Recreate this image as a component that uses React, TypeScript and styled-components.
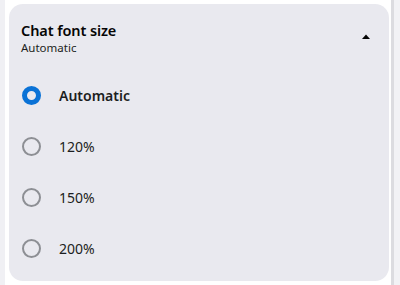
import React, { useState } from 'react';
import styled, { createGlobalStyle } from 'styled-components';

const GlobalStyle = createGlobalStyle`
	html, body {
		margin: 0;
		padding: 0;
		background: #ffffff;
	}
	body {
		font-family: 'Noto Sans', 'Open Sans', sans-serif;
		color: #050505;
	}
`;

const StyledPage = styled.div`
	display: flex;
	width: 400px;
	height: 285px;
	overflow: hidden;
	background: #ffffff;
`;

const StyledLeftEdge = styled.div`
	width: 5px;
	background: #f0f0f4;
	margin-right: 4px;
`;

const StyledCard = styled.section`
	width: 380px;
	margin-top: 4px;
	height: 277px;
	background: #e9e9ef;
	border-radius: 14px;
	box-sizing: border-box;
`;

const StyledScrollbar = styled.div`
	display: flex;
	margin-left: 2px;

	&::before {
		content: '';
		width: 3px;
		background: #dcdce0;
	}

	&::after {
		content: '';
		width: 6px;
		background: #f2f2f5;
	}
`;

const StyledHeader = styled.button`
	display: flex;
	align-items: flex-start;
	justify-content: space-between;
	width: 100%;
	padding: 16px 19px 0 12px;
	height: 58px;
	box-sizing: border-box;
	background: none;
	border: 0;
	text-align: left;
	font: inherit;
	color: inherit;
	cursor: pointer;
`;

const StyledTitle = styled.div`
	font-size: 14.5px;
	font-weight: 600;
	line-height: 20px;
	letter-spacing: -0.1px;
`;

const StyledSubtitle = styled.div`
	font-size: 11.5px;
	line-height: 15px;
	color: #1c1e21;
`;

const StyledCaret = styled.svg`
	width: 8px;
	height: 5px;
	margin-top: 14px;
`;

const StyledOptions = styled.ul`
	list-style: none;
	margin: 0;
	padding: 8px 0 0 13px;
`;

const StyledOption = styled.li`
	display: flex;
	align-items: center;
	height: 51px;
	cursor: pointer;
`;

const StyledRadio = styled.span<{ checked?: boolean }>`
	width: 19px;
	height: 19px;
	box-sizing: border-box;
	border-radius: 50%;
	border: ${({ checked }) => (checked ? '5.5px solid #0a72d6' : '2px solid #8d8f94')};
	margin-right: 18px;
`;

const StyledLabel = styled.span<{ checked?: boolean }>`
	font-size: 14px;
	font-weight: ${({ checked }) => (checked ? 600 : 400)};
	color: #1c1e21;
`;

const options = ['Automatic', '120%', '150%', '200%'];

const App = () => {
	const [selected, setSelected] = useState('Automatic');

	return (
		<StyledPage>
			<GlobalStyle />
			<StyledLeftEdge />
			<StyledCard>
				<StyledHeader type='button'>
					<div>
						<StyledTitle>Chat font size</StyledTitle>
						<StyledSubtitle>{selected}</StyledSubtitle>
					</div>
					<StyledCaret viewBox='0 0 8 5'>
						<path d='M0 5 L4 0.5 L8 5 Z' fill='#050505' />
					</StyledCaret>
				</StyledHeader>
				<StyledOptions>
					{options.map((option) => (
						<StyledOption key={option} onClick={() => setSelected(option)}>
							<StyledRadio checked={selected === option} />
							<StyledLabel checked={selected === option}>{option}</StyledLabel>
						</StyledOption>
					))}
				</StyledOptions>
			</StyledCard>
			<StyledScrollbar />
		</StyledPage>
	);
};

export default App;
